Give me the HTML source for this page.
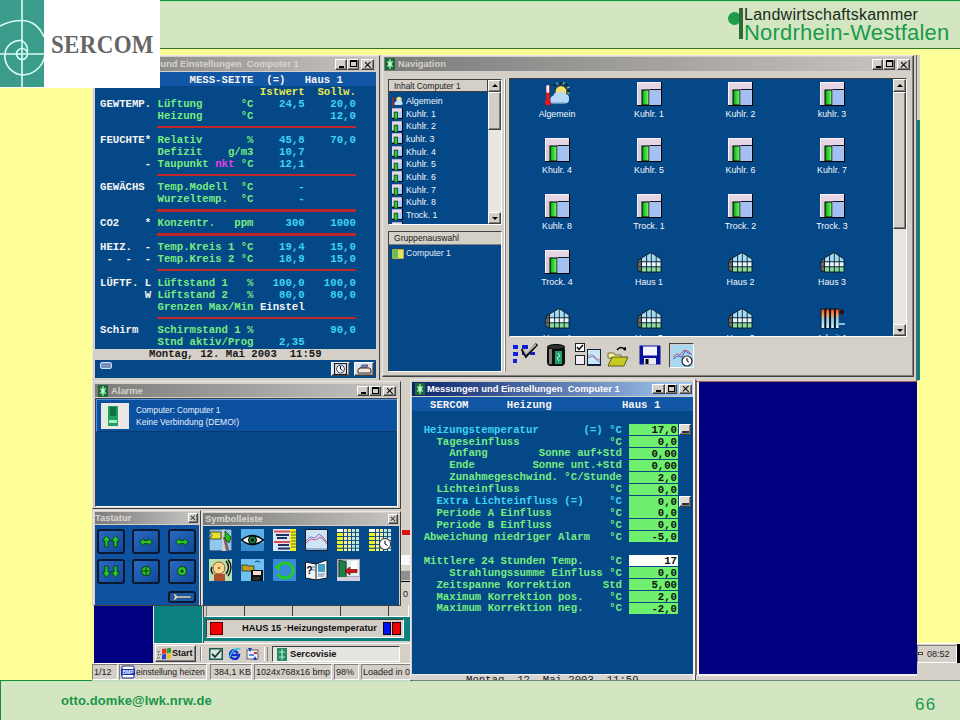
<!DOCTYPE html>
<html><head><meta charset="utf-8">
<style>
*{margin:0;padding:0;box-sizing:border-box}
html,body{width:960px;height:720px;overflow:hidden;background:#ffff99;font-family:"Liberation Sans",sans-serif}
.a{position:absolute}
.mono{font-family:"Liberation Mono",monospace;font-weight:bold;font-size:10.667px;line-height:12px;white-space:pre}
.ui{font-family:"Liberation Sans",sans-serif;font-size:8.5px;white-space:pre}
.face{background:#d4d0c8}
.tb-in{background:linear-gradient(90deg,#7c7c7c,#c8c6c4)}
.tb-act{background:linear-gradient(90deg,#0a246a,#a6caf0)}
.btn{position:absolute;background:#d4d0c8;border:1px solid;border-color:#fff #404040 #404040 #fff;box-shadow:inset -1px -1px #808080}
.bmin::after{content:'';position:absolute;left:3px;bottom:1px;width:5px;height:2px;background:#000}
.bmax::after{content:'';position:absolute;box-sizing:border-box;left:2px;top:0px;width:7px;height:7px;border:1px solid #000;border-top-width:2px}
.bcls::before,.bcls::after{content:'';position:absolute;left:50%;top:50%;width:7.5px;height:1.2px;background:#000;transform:translate(-55%,-60%) rotate(45deg)}
.bcls::after{transform:translate(-55%,-60%) rotate(-45deg)}
.w{color:#f4f4f4}.g{color:#76ec80}.c{color:#3cd4f4}.y{color:#e8e850}.m{color:#e040e0}.k{color:#101010}
.bsm::before,.bsm::after{width:5.5px;height:1.2px;background:#383838}
.rl{position:absolute;height:2px;background:#c02828}
</style></head><body>

<svg width="0" height="0" style="position:absolute">
<defs>
<linearGradient id="gg" x1="0" y1="0" x2="1" y2="0"><stop offset="0" stop-color="#10a010"/><stop offset="0.6" stop-color="#40e040"/><stop offset="1" stop-color="#80f080"/></linearGradient>
<linearGradient id="radg" x1="0" y1="0" x2="0" y2="1"><stop offset="0" stop-color="#ff5010"/><stop offset="0.3" stop-color="#f0a060"/><stop offset="0.55" stop-color="#90d0f0"/><stop offset="1" stop-color="#d0f0ff"/></linearGradient>
<symbol id="kuh" viewBox="0 0 25 24">
<rect x="0" y="0" width="25" height="24" fill="#000"/>
<rect x="0" y="0" width="24" height="23" fill="#d4cadc"/>
<rect x="1" y="1" width="23" height="6" fill="#e4d4e4"/>
<path d="M0.5 23V0.5H24" stroke="#faf4fa" fill="none"/>
<rect x="4.5" y="7.5" width="8" height="15.5" fill="#000"/>
<rect x="5.5" y="8.5" width="6" height="14" fill="url(#gg)"/>
<rect x="12.5" y="7.5" width="11" height="15.5" fill="#a4c0f2"/>
<path d="M12.5 7.5H24" stroke="#101828" stroke-width="1"/>
</symbol>
<symbol id="kuhs" viewBox="0 0 25 24">
<rect x="0" y="0" width="25" height="24" fill="#000"/>
<rect x="0" y="0" width="22.5" height="21.5" fill="#e2d8ea"/>
<rect x="4" y="8" width="9.5" height="16" fill="#0a200a"/>
<rect x="5.5" y="9.5" width="6.5" height="14.5" fill="#30c830"/>
<rect x="13.5" y="8.5" width="9" height="13" fill="#a8c8f8"/>
</symbol>
<symbol id="gh" viewBox="0 0 25 24">
<path d="M4.5 8 Q0.5 9.5 0.3 14 V18.5 Q0.8 21.5 4.5 22 Z" fill="#686868" stroke="#000" stroke-width="0.7"/>
<path d="M1 12.5 L4.5 11.5 M1 17 L4.5 16.5" stroke="#202020" stroke-width="0.7"/>
<path d="M4.5 8 L14 2.5 L24 9 V11.8 H4.5 Z" fill="#a4dcf4"/>
<rect x="4.5" y="11.8" width="19.5" height="5" fill="#e8f8fc"/>
<rect x="4.5" y="16.8" width="19.5" height="5.2" fill="#88dc9c"/>
<path d="M4.5 8 L14 2.5 L24 9 V22 H4.5 Z M4.5 11.8H24 M4.5 16.8H24 M9.6 5.2V22 M14.3 2.8V22 M19.2 6V22" fill="none" stroke="#061020" stroke-width="0.85"/>
</symbol>
<symbol id="alg" viewBox="0 0 25 24">
<g stroke="#1a1a08" stroke-width="1.3">
<path d="M15.5 2.5V0 M20.5 4L22.5 1.8 M22.5 8.5H25 M10.5 4L8.5 2 M21.5 13L24 14.5"/>
</g>
<g stroke="#e0e070" stroke-width="1"><path d="M12.8 2.5L11.5 0.3 M18.3 2.3L19.2 0.2 M22 6L24.5 5 M22.3 11L24.5 11.5"/></g>
<circle cx="16" cy="9.5" r="5.8" fill="#f4e070" stroke="#2a2a10" stroke-width="0.8"/>
<path d="M5.5 19 Q4.5 14.5 8.5 13.5 Q9.5 9.5 14 10.5 Q18 8.5 20.5 12 Q24.5 12.5 24 17 Q24.5 21 20 21.5 H9 Q5.5 22 5.5 19Z" fill="#b8d8f8"/>
<path d="M7 20.5 H21" stroke="#90b8e8" stroke-width="1"/>
<rect x="1" y="3" width="3.6" height="16" rx="1.8" fill="#e01818"/>
<rect x="1.4" y="3" width="2.8" height="8" rx="1.4" fill="#f8f4f4"/>
<circle cx="2.8" cy="20.5" r="3" fill="#e01818"/>
</symbol>
<symbol id="algs" viewBox="0 0 25 24">
<rect x="0" y="2" width="3" height="22" fill="#c02020"/>
<circle cx="16" cy="7" r="6" fill="#f0e080"/>
<path d="M5 18 Q5 12 11 11 Q14 7 19 9 Q24 10 24 15 Q25 20 20 20 H7Z" fill="#c8e0f8"/>
</symbol>
<symbol id="rad" viewBox="0 0 25 24">
<rect x="0.5" y="2.5" width="18.5" height="20" fill="#06101e"/>
<rect x="1.5" y="3.5" width="2.8" height="18.5" fill="url(#radg)"/>
<rect x="6.3" y="3.5" width="2.8" height="18.5" fill="url(#radg)"/>
<rect x="11.1" y="3.5" width="2.8" height="18.5" fill="url(#radg)"/>
<rect x="15.9" y="3.5" width="2.8" height="18.5" fill="url(#radg)"/>
<circle cx="21.5" cy="6" r="2.5" fill="#301010"/>
<rect x="19" y="17.3" width="6" height="1.4" fill="#c0e8ff"/>
</symbol>
<symbol id="tb1" viewBox="0 0 26 25">
<rect x="1" y="2" width="5" height="4" fill="#1020e0"/><rect x="1" y="9" width="5" height="4" fill="#1020e0"/><rect x="1" y="16" width="4" height="4" fill="#1020e0"/>
<rect x="10" y="2" width="6" height="4" fill="#1020d0"/><rect x="10" y="9" width="4" height="3" fill="#1020d0"/><rect x="18" y="9" width="5" height="3" fill="#1020d0"/>
<path d="M10 6 L14 13 L25 1" fill="none" stroke="#101010" stroke-width="3"/>
<path d="M11 6 L14 11 L24 1.5" fill="none" stroke="#c8c8c8" stroke-width="1.2"/>
</symbol>
<symbol id="tb2" viewBox="0 0 20 25">
<rect x="1" y="3" width="18" height="20" rx="4" fill="#101010"/>
<ellipse cx="10" cy="4" rx="8.5" ry="2.5" fill="#303030" stroke="#000"/>
<rect x="3" y="6" width="3" height="15" fill="#808080"/>
<rect x="9" y="8" width="7" height="13" fill="#20a070"/>
<path d="M12 10 L14 13 L11 15 L13 18" stroke="#c0ffe0" stroke-width="1" fill="none"/>
</symbol>
<symbol id="tb3" viewBox="0 0 26 25">
<rect x="12" y="6" width="14" height="17" fill="#10203a"/><rect x="13" y="7" width="12" height="14" fill="#c8e8f8"/>
<path d="M13 13 Q17 10 19 13 T25 17" stroke="#d06080" stroke-width="0.8" fill="none"/>
<path d="M13 15 Q18 12 20 15 T25 19" stroke="#6060c0" stroke-width="0.8" fill="none"/>
<rect x="0.5" y="0.5" width="9" height="8" fill="#fff" stroke="#202020"/>
<path d="M2 4 L4 6.5 L8 2" stroke="#000" stroke-width="1.4" fill="none"/>
<rect x="0.5" y="12.5" width="9" height="9" fill="#f0eef4" stroke="#202020"/>
</symbol>
<symbol id="tb4" viewBox="0 0 24 22">
<path d="M10 5 Q14 0 18 5" stroke="#000" stroke-width="1.5" fill="none"/><path d="M16 3 L19 6 L19 2Z" fill="#000"/>
<path d="M1 8 H7 L8 10 H14 V13 H1Z" fill="#f8f0a0" stroke="#404010" stroke-width="0.7"/>
<path d="M1 21 L5 12 H21 L17 21Z" fill="#c8c820" stroke="#404010" stroke-width="0.8"/>
</symbol>
<symbol id="tb5" viewBox="0 0 22 22">
<rect x="0.5" y="0.5" width="21" height="19" fill="#0a10a0"/>
<rect x="4" y="1.5" width="14" height="9" fill="#f4f4ff"/>
<rect x="5" y="13" width="12" height="6.5" fill="#e8e8f0"/><rect x="6.5" y="14" width="3" height="5" fill="#000"/>
</symbol>
<symbol id="tb6" viewBox="0 0 22 22">
<rect x="0" y="0" width="22" height="22" fill="#a8d8f0"/>
<path d="M2 12 L6 9 L9 10 L13 5 L17 6 L21 10" stroke="#d04050" stroke-width="0.9" fill="none"/>
<path d="M2 14 L7 11 L11 12 L14 6 L19 9" stroke="#4050c0" stroke-width="0.9" fill="none"/>
<circle cx="16" cy="16" r="5" fill="#fff" stroke="#202030" stroke-width="1.2"/>
<path d="M16 13V16L18 17" stroke="#000" stroke-width="1" fill="none"/>
</symbol>
</defs></svg>

<svg width="0" height="0" style="position:absolute"><defs>
<symbol id="s1" viewBox="0 0 23 22"><rect width="23" height="22" fill="#90c8f0" stroke="#102030" stroke-width="1"/><path d="M0.5 3 H12 V10 H0.5 L3 6.5Z" fill="#e8e030" stroke="#303010" stroke-width="0.8"/><path d="M13 0.5 L16 0.5 L17 22 H13Z" fill="#d0d0d0"/><path d="M14 8 L17 21.5 H20 L17 8Z" fill="#806060"/><path d="M16 2 L22 8 L20 14 L16 10Z" fill="#20c020" stroke="#063006" stroke-width="0.7"/></symbol>
<symbol id="s2" viewBox="0 0 23 22"><rect width="23" height="22" fill="#5ab0e8"/><rect y="14" width="23" height="8" fill="#3a90d0"/><path d="M0.5 11 Q11.5 2 22.5 11 Q11.5 20 0.5 11Z" fill="#f0f0f0" stroke="#000" stroke-width="1.6"/><circle cx="11.5" cy="11" r="4" fill="#108040" stroke="#000" stroke-width="1"/><circle cx="11.5" cy="11" r="1.5" fill="#000"/></symbol>
<symbol id="s3" viewBox="0 0 23 22"><rect width="23" height="22" fill="#d8e8f8"/><rect x="17" y="0" width="6" height="22" fill="#f0f020"/><rect x="1" y="1.5" width="16" height="2" fill="#e05050"/><rect x="3" y="5" width="13" height="2" fill="#203060"/><rect x="4" y="8" width="10" height="2" fill="#203060"/><rect x="1" y="12" width="16" height="2" fill="#e05050"/><rect x="5" y="15" width="11" height="2" fill="#203060"/><rect x="5" y="18.5" width="12" height="2" fill="#203060"/><path d="M18 3H23M18 6H23M18 9H23M18 12H23M18 15H23M18 18H23" stroke="#303030" stroke-width="0.7"/></symbol>
<symbol id="s4" viewBox="0 0 23 22"><rect x="0.5" y="0.5" width="22" height="21" fill="#d0e4f8" stroke="#102030"/><path d="M1 12 L5 8 L10 9 L14 5 L18 8 L22 13" stroke="#8060c0" stroke-width="0.9" fill="none"/><path d="M1 14 L6 10 L11 11 L15 8 L19 11 L22 15" stroke="#d04060" stroke-width="0.9" fill="none"/><rect x="1" y="19" width="21" height="2" fill="#90b0d8"/></symbol>
<symbol id="s5" viewBox="0 0 23 22"><rect width="23" height="22" fill="#0e4a8a"/><g fill="#f0f020"><rect x="0" y="4" width="6" height="3"/><rect x="0" y="8" width="6" height="3"/><rect x="0" y="12" width="6" height="3"/><rect x="0" y="16" width="6" height="3"/><rect x="0" y="19.5" width="6" height="2.5"/></g><rect x="0" y="0" width="6" height="3" fill="#fff"/><g fill="#f4f4a0"><rect x="7" y="0" width="3" height="22"/><rect x="11" y="0" width="3" height="22"/></g><g fill="#c0e8d0"><rect x="15" y="0" width="3" height="22"/><rect x="19" y="0" width="3" height="22"/></g><path d="M0 3.5H23M0 7.5H23M0 11.5H23M0 15.5H23M0 19.2H23" stroke="#0e4a8a" stroke-width="0.9"/></symbol>
<symbol id="s6" viewBox="0 0 23 22"><use href="#s5"/><circle cx="16" cy="15" r="5.5" fill="#fff" stroke="#303030" stroke-width="1"/><path d="M16 11.5V15L18.5 16.5" stroke="#000" stroke-width="1" fill="none"/></symbol>
<symbol id="s7" viewBox="0 0 23 22"><rect width="23" height="22" fill="#b8e0b0"/><rect x="5" y="15" width="11" height="7" fill="#b05030"/><circle cx="10" cy="9" r="6" fill="#f8d890" stroke="#a05020" stroke-width="1"/><circle cx="10" cy="9" r="1" fill="#a03010"/><path d="M17 2 Q22 8 17 15 M19 0.5 Q25 8 19 17 M3 8 Q1 12 4 15" stroke="#101010" stroke-width="1.4" fill="none"/></symbol>
<symbol id="s8" viewBox="0 0 23 22"><rect width="23" height="22" fill="#70c0f0"/><path d="M1 6 H6 L7 7 H13 V12 H1Z" fill="#c0a020" stroke="#202010" stroke-width="0.7"/><path d="M14 3 Q16 1 19 3" stroke="#103080" stroke-width="1" fill="none"/><rect x="10" y="11" width="12" height="11" fill="#101010"/><rect x="12" y="12" width="8" height="4" fill="#f8e0d0"/><rect x="12" y="18" width="7" height="3" fill="#303030"/></symbol>
<symbol id="s9" viewBox="0 0 23 22"><rect width="23" height="22" fill="#3a88d8"/><path d="M5 8 A8 7.5 0 1 1 5 15" stroke="#20d020" stroke-width="2.8" fill="none"/><path d="M1 8 L7 5 L7 12Z" fill="#20d020"/></symbol>
<symbol id="s10" viewBox="0 0 23 22"><rect width="23" height="22" fill="#054887"/><path d="M0.5 3 L11 5 L22 1 V19 L11 21 L0.5 19Z" fill="#f0f4f8" stroke="#101820" stroke-width="1"/><path d="M11 5V21" stroke="#101820"/><rect x="13" y="5" width="7" height="8" fill="#40a0c0"/><text x="1.5" y="15" font-size="10" font-weight="bold" font-family="Liberation Sans" fill="#000">?</text><path d="M6 8H10M6 11H10M13 15H20M13 17H19" stroke="#6080a0" stroke-width="1"/></symbol>
<symbol id="s11" viewBox="0 0 23 22"><rect width="23" height="22" fill="#b0a8b0"/><rect x="10" y="1" width="12" height="16" fill="#e0f0f0"/><rect x="14" y="2" width="6" height="8" fill="#fff"/><path d="M2 1 L9 3 V19 L2 21Z" fill="#20804a" stroke="#103020" stroke-width="0.8"/><path d="M8 12 L13 8 V10.5 H20 V13.5 H13 V16Z" fill="#e01010" stroke="#400" stroke-width="0.6"/><rect y="18" width="23" height="4" fill="#d0d0e0"/></symbol>
</defs></svg>

<!-- header band -->
<div class="a" style="left:0;top:0;width:960px;height:49px;background:#d3e6c1;border-top:1px solid #1f8a3a;border-bottom:1px solid #2a7a2a"></div>
<div class="a" style="left:0;top:1px;width:960px;height:1px;background:#a8f0b0"></div>
<!-- footer band -->
<div class="a" style="left:0;top:680px;width:960px;height:40px;background:#d3e6c1;border-top:1px solid #1f8a3a;border-left:1px solid #1f8a3a"></div>
<div class="a" style="left:1px;top:681px;width:959px;height:1px;background:#b4f0bc"></div>
<!-- screenshot grey bg -->
<div class="a face" style="left:92px;top:55px;width:828px;height:326px"></div>
<div class="a face" style="left:92px;top:380px;width:825px;height:301px"></div>

<!-- ===== W1 Messungen 1 ===== -->
<div class="a face" style="left:92px;top:55px;width:288px;height:327px;border:1px solid;border-color:#e8e8e8 #404040 #404040 #e8e8e8"></div>
<div class="a tb-in" style="left:95px;top:57px;width:281px;height:14px"></div>
<div class="a" style="left:106px;top:57px;font:bold 9.4px/14px 'Liberation Sans',sans-serif;color:#d8d4cc;white-space:pre">Messungen und Einstellungen  Computer 1</div>
<div class="btn bmin" style="left:335px;top:59px;width:12px;height:11px"></div>
<div class="btn bmax" style="left:347px;top:59px;width:12px;height:11px"></div>
<div class="btn bcls" style="left:361px;top:59px;width:13px;height:11px"></div>
<div class="a" style="left:95px;top:72px;width:281px;height:277px;background:#054887"></div>
<div class="a" style="left:95px;top:72px;width:281px;height:14px;background:#1256a6"></div>
<div class="a mono w" style="left:100px;top:74px">              MESS-SEITE  (=)   Haus 1</div>
<div class="a mono" style="left:100px;top:87px;line-height:11.92px"><span class="y">                         Istwert  Sollw.</span>
<span class="w">GEWTEMP.</span> <span class="g">Lüftung      °C</span>    <span class="c">24,5    20,0</span>
<span class="g">         Heizung      °C</span>            <span class="c">12,0</span>

<span class="w">FEUCHTE*</span> <span class="g">Relativ       %</span>    <span class="c">45,8    70,0</span>
<span class="g">         Defizit    g/m3</span>    <span class="c">10,7</span>
<span class="w">       -</span> <span class="g">Taupunkt</span> <span class="m">nkt</span> <span class="g">°C</span>    <span class="c">12,1</span>

<span class="w">GEWÄCHS</span>  <span class="g">Temp.Modell  °C</span>       <span class="c">-</span>
<span class="g">         Wurzeltemp.  °C</span>       <span class="c">-</span>

<span class="w">CO2    *</span> <span class="g">Konzentr.   ppm</span>     <span class="c">300    1000</span>

<span class="w">HEIZ.  -</span> <span class="g">Temp.Kreis 1 °C</span>    <span class="c">19,4    15,0</span>
<span class="w"> -  -  -</span> <span class="g">Temp.Kreis 2 °C</span>    <span class="c">18,9    15,0</span>

<span class="w">LÜFTF. L</span> <span class="g">Lüftstand 1   %</span>   <span class="c">100,0   100,0</span>
<span class="w">       W</span> <span class="g">Lüftstand 2   %</span>    <span class="c">80,0    80,0</span>
<span class="g">         Grenzen Max/Min</span> <span class="w">Einstel</span>

<span class="w">Schirm</span>   <span class="g">Schirmstand 1 %</span>            <span class="c">90,0</span>
<span class="g">         Stnd aktiv/Prog</span>    <span class="c">2,35</span></div>
<div class="rl" style="left:157px;top:125.9px;width:199px;height:2.5px"></div>
<div class="rl" style="left:157px;top:173.6px;width:199px;height:2.5px"></div>
<div class="rl" style="left:157px;top:209.3px;width:199px;height:2.5px"></div>
<div class="rl" style="left:157px;top:233.2px;width:199px;height:2.5px"></div>
<div class="rl" style="left:157px;top:268.9px;width:199px;height:2.5px"></div>
<div class="rl" style="left:157px;top:316.6px;width:199px;height:2.5px"></div>
<div class="a face" style="left:95px;top:349px;width:281px;height:11px"></div>
<div class="a" style="left:149px;top:348px;font:bold 10.667px/12px 'Liberation Mono',monospace;color:#181818;white-space:pre">Montag, 12. Mai 2003  11:59</div>
<div class="a" style="left:95px;top:360px;width:281px;height:18px;background:#054887"></div>
<div class="a" style="left:100px;top:362px;width:12px;height:7px;border:1px solid #d0e0ff;border-radius:2px;background:#7890c0"></div>
<div class="btn" style="left:331px;top:362px;width:19px;height:14px;background:#dde4ee"></div><svg class="a" style="left:334px;top:363px" width="13" height="12"><rect x="0.5" y="0.5" width="12" height="11" fill="#e8eef8" stroke="#101828" stroke-width="1.2"/><circle cx="6.5" cy="6" r="4" fill="#f8f8ff" stroke="#404050"/><path d="M6.5 3V6L8.5 7.5" stroke="#000" fill="none"/></svg>
<div class="btn" style="left:354px;top:362px;width:20px;height:14px;background:#dde4ee"></div><svg class="a" style="left:357px;top:364px" width="15" height="11"><path d="M5 1 L11 1 L9 5 H3Z" fill="#8080c0" stroke="#303040" stroke-width="0.7"/><path d="M1 6 Q1 4 4 4 H12 Q14 4 14 7 V9 H1Z" fill="#f0e8e0" stroke="#402010" stroke-width="1"/></svg>

<!-- ===== Navigation window ===== -->
<div class="a face" style="left:382px;top:55px;width:532px;height:322px;border:1px solid;border-color:#e8e8e8 #404040 #404040 #e8e8e8;box-shadow:inset -1px -1px #808080"></div>
<div class="a tb-in" style="left:384px;top:57px;width:528px;height:14px"></div>
<svg class="a" style="left:385px;top:58px" width="10" height="12"><rect width="10" height="12" fill="#1f6a3a"/><path d="M5 1v10M2 4h6M2 8h6" stroke="#8ee0a0" stroke-width="1.5"/><circle cx="5" cy="6" r="2" fill="#c0ffd0"/></svg>
<div class="a" style="left:398px;top:57px;font:bold 9.4px/14px 'Liberation Sans',sans-serif;color:#d4d0c8;white-space:pre">Navigation</div>
<div class="btn bmin" style="left:872px;top:59px;width:11px;height:11px"></div>
<div class="btn bmax" style="left:883px;top:59px;width:12px;height:11px"></div>
<div class="btn bcls" style="left:897px;top:59px;width:13px;height:11px"></div>
<div class="a" style="left:388px;top:79px;width:114px;height:146px;border:1px solid;border-color:#404040 #fff #fff #404040;background:#054887"></div>
<div class="a btnh" style="left:389px;top:80px;width:99px;height:12px;background:#d4d0c8;border-right:1px solid #404040;border-bottom:1px solid #404040"></div>
<div class="a ui" style="left:394px;top:80px;font-size:8.4px;line-height:12px;color:#202020">Inhalt Computer 1</div>
<div class="a" style="left:488px;top:80px;width:13px;height:144px;background:#e8e6e2"></div>
<div class="btn" style="left:488px;top:80px;width:13px;height:12px"></div>
<div class="btn" style="left:488px;top:92px;width:13px;height:38px"></div>
<div class="btn" style="left:488px;top:212px;width:13px;height:12px"></div>
<div class="a" style="left:492px;top:84px;width:0;height:0;border-left:3px solid transparent;border-right:3px solid transparent;border-bottom:3px solid #000"></div>
<div class="a" style="left:492px;top:217px;width:0;height:0;border-left:3px solid transparent;border-right:3px solid transparent;border-top:3px solid #000"></div>
<div class="a" style="left:389px;top:92px;width:99px;height:132px;overflow:hidden">
<svg class="a" style="left:3px;top:3.5px" width="11" height="11"><use href="#algs"/></svg>
<div class="a ui" style="left:17px;top:3.0px;font-size:8.8px;line-height:13px;color:#f0f6ff">Algemein</div>
<svg class="a" style="left:3px;top:16.2px" width="11" height="11"><use href="#kuhs"/></svg>
<div class="a ui" style="left:17px;top:15.7px;font-size:8.8px;line-height:13px;color:#f0f6ff">Kuhlr. 1</div>
<svg class="a" style="left:3px;top:28.8px" width="11" height="11"><use href="#kuhs"/></svg>
<div class="a ui" style="left:17px;top:28.3px;font-size:8.8px;line-height:13px;color:#f0f6ff">Kuhlr. 2</div>
<svg class="a" style="left:3px;top:41.4px" width="11" height="11"><use href="#kuhs"/></svg>
<div class="a ui" style="left:17px;top:40.9px;font-size:8.8px;line-height:13px;color:#f0f6ff">kuhlr. 3</div>
<svg class="a" style="left:3px;top:54.1px" width="11" height="11"><use href="#kuhs"/></svg>
<div class="a ui" style="left:17px;top:53.6px;font-size:8.8px;line-height:13px;color:#f0f6ff">Khulr. 4</div>
<svg class="a" style="left:3px;top:66.8px" width="11" height="11"><use href="#kuhs"/></svg>
<div class="a ui" style="left:17px;top:66.2px;font-size:8.8px;line-height:13px;color:#f0f6ff">Kuhlr. 5</div>
<svg class="a" style="left:3px;top:79.4px" width="11" height="11"><use href="#kuhs"/></svg>
<div class="a ui" style="left:17px;top:78.9px;font-size:8.8px;line-height:13px;color:#f0f6ff">Kuhlr. 6</div>
<svg class="a" style="left:3px;top:92.1px" width="11" height="11"><use href="#kuhs"/></svg>
<div class="a ui" style="left:17px;top:91.6px;font-size:8.8px;line-height:13px;color:#f0f6ff">Kuhlr. 7</div>
<svg class="a" style="left:3px;top:104.7px" width="11" height="11"><use href="#kuhs"/></svg>
<div class="a ui" style="left:17px;top:104.2px;font-size:8.8px;line-height:13px;color:#f0f6ff">Kuhlr. 8</div>
<svg class="a" style="left:3px;top:117.4px" width="11" height="11"><use href="#kuhs"/></svg>
<div class="a ui" style="left:17px;top:116.9px;font-size:8.8px;line-height:13px;color:#f0f6ff">Trock. 1</div>
<svg class="a" style="left:3px;top:130.0px" width="11" height="11"><use href="#kuhs"/></svg>
<div class="a ui" style="left:17px;top:129.5px;font-size:8.8px;line-height:13px;color:#f0f6ff">Trock. 2</div>
</div>
<div class="a" style="left:388px;top:231px;width:114px;height:141px;border:1px solid;border-color:#404040 #fff #fff #404040;background:#054887"></div>
<div class="a" style="left:389px;top:232px;width:112px;height:13px;background:#d4d0c8;border-bottom:1px solid #808080"></div>
<div class="a ui" style="left:394px;top:232px;font-size:8.6px;line-height:13px;color:#202020">Gruppenauswahl</div>
<svg class="a" style="left:392px;top:248px" width="12" height="11"><rect x="0" y="1" width="12" height="10" fill="#e8e060" stroke="#404020" stroke-width="0.6"/><rect x="1" y="2" width="5" height="8" fill="#60c060"/></svg>
<div class="a ui" style="left:406px;top:247px;font-size:8.6px;line-height:13px;color:#e0ecff">Computer 1</div>
<div class="a" style="left:504px;top:79px;width:2px;height:293px;border-left:1px solid #fff;border-right:1px solid #808080"></div>
<div class="a" style="left:509px;top:78px;width:398px;height:259px;border:1px solid;border-color:#404040 #fff #fff #404040"></div>
<div class="a" style="left:510px;top:79px;width:383px;height:257px;background:#054887;overflow:hidden">
<svg class="a" style="left:34.5px;top:2.5px" width="25" height="24"><use href="#alg"/></svg>
<div class="a ui" style="left:7px;top:29.5px;width:80px;text-align:center;font-size:8.8px;line-height:11px;color:#f4f8ff">Algemein</div>
<svg class="a" style="left:126.5px;top:2.5px" width="25" height="24"><use href="#kuh"/></svg>
<div class="a ui" style="left:99px;top:29.5px;width:80px;text-align:center;font-size:8.8px;line-height:11px;color:#f4f8ff">Kuhlr. 1</div>
<svg class="a" style="left:218.0px;top:2.5px" width="25" height="24"><use href="#kuh"/></svg>
<div class="a ui" style="left:190.5px;top:29.5px;width:80px;text-align:center;font-size:8.8px;line-height:11px;color:#f4f8ff">Kuhlr. 2</div>
<svg class="a" style="left:309.5px;top:2.5px" width="25" height="24"><use href="#kuh"/></svg>
<div class="a ui" style="left:282px;top:29.5px;width:80px;text-align:center;font-size:8.8px;line-height:11px;color:#f4f8ff">kuhlr. 3</div>
<svg class="a" style="left:34.5px;top:58.5px" width="25" height="24"><use href="#kuh"/></svg>
<div class="a ui" style="left:7px;top:85.5px;width:80px;text-align:center;font-size:8.8px;line-height:11px;color:#f4f8ff">Khulr. 4</div>
<svg class="a" style="left:126.5px;top:58.5px" width="25" height="24"><use href="#kuh"/></svg>
<div class="a ui" style="left:99px;top:85.5px;width:80px;text-align:center;font-size:8.8px;line-height:11px;color:#f4f8ff">Kuhlr. 5</div>
<svg class="a" style="left:218.0px;top:58.5px" width="25" height="24"><use href="#kuh"/></svg>
<div class="a ui" style="left:190.5px;top:85.5px;width:80px;text-align:center;font-size:8.8px;line-height:11px;color:#f4f8ff">Kuhlr. 6</div>
<svg class="a" style="left:309.5px;top:58.5px" width="25" height="24"><use href="#kuh"/></svg>
<div class="a ui" style="left:282px;top:85.5px;width:80px;text-align:center;font-size:8.8px;line-height:11px;color:#f4f8ff">Kuhlr. 7</div>
<svg class="a" style="left:34.5px;top:114.5px" width="25" height="24"><use href="#kuh"/></svg>
<div class="a ui" style="left:7px;top:141.5px;width:80px;text-align:center;font-size:8.8px;line-height:11px;color:#f4f8ff">Kuhlr. 8</div>
<svg class="a" style="left:126.5px;top:114.5px" width="25" height="24"><use href="#kuh"/></svg>
<div class="a ui" style="left:99px;top:141.5px;width:80px;text-align:center;font-size:8.8px;line-height:11px;color:#f4f8ff">Trock. 1</div>
<svg class="a" style="left:218.0px;top:114.5px" width="25" height="24"><use href="#kuh"/></svg>
<div class="a ui" style="left:190.5px;top:141.5px;width:80px;text-align:center;font-size:8.8px;line-height:11px;color:#f4f8ff">Trock. 2</div>
<svg class="a" style="left:309.5px;top:114.5px" width="25" height="24"><use href="#kuh"/></svg>
<div class="a ui" style="left:282px;top:141.5px;width:80px;text-align:center;font-size:8.8px;line-height:11px;color:#f4f8ff">Trock. 3</div>
<svg class="a" style="left:34.5px;top:170.5px" width="25" height="24"><use href="#kuh"/></svg>
<div class="a ui" style="left:7px;top:197.5px;width:80px;text-align:center;font-size:8.8px;line-height:11px;color:#f4f8ff">Trock. 4</div>
<svg class="a" style="left:126.5px;top:170.5px" width="25" height="24"><use href="#gh"/></svg>
<div class="a ui" style="left:99px;top:197.5px;width:80px;text-align:center;font-size:8.8px;line-height:11px;color:#f4f8ff">Haus 1</div>
<svg class="a" style="left:218.0px;top:170.5px" width="25" height="24"><use href="#gh"/></svg>
<div class="a ui" style="left:190.5px;top:197.5px;width:80px;text-align:center;font-size:8.8px;line-height:11px;color:#f4f8ff">Haus 2</div>
<svg class="a" style="left:309.5px;top:170.5px" width="25" height="24"><use href="#gh"/></svg>
<div class="a ui" style="left:282px;top:197.5px;width:80px;text-align:center;font-size:8.8px;line-height:11px;color:#f4f8ff">Haus 3</div>
<svg class="a" style="left:34.5px;top:226.5px" width="25" height="24"><use href="#gh"/></svg>
<div class="a ui" style="left:7px;top:253.5px;width:80px;text-align:center;font-size:8.8px;line-height:11px;color:#f4f8ff">Haus 4</div>
<svg class="a" style="left:126.5px;top:226.5px" width="25" height="24"><use href="#gh"/></svg>
<div class="a ui" style="left:99px;top:253.5px;width:80px;text-align:center;font-size:8.8px;line-height:11px;color:#f4f8ff">Haus 5</div>
<svg class="a" style="left:218.0px;top:226.5px" width="25" height="24"><use href="#gh"/></svg>
<div class="a ui" style="left:190.5px;top:253.5px;width:80px;text-align:center;font-size:8.8px;line-height:11px;color:#f4f8ff">Haus 6</div>
<svg class="a" style="left:309.5px;top:226.5px" width="25" height="24"><use href="#rad"/></svg>
<div class="a ui" style="left:282px;top:253.5px;width:80px;text-align:center;font-size:8.8px;line-height:11px;color:#f4f8ff">Arbeit 1</div>
</div>
<div class="a" style="left:893px;top:79px;width:13px;height:257px;background:#e8e6e2"></div>
<div class="btn" style="left:893px;top:79px;width:13px;height:13px"></div>
<div class="btn" style="left:893px;top:92px;width:13px;height:137px"></div>
<div class="btn" style="left:893px;top:324px;width:13px;height:12px"></div>
<div class="a" style="left:897px;top:84px;width:0;height:0;border-left:3px solid transparent;border-right:3px solid transparent;border-bottom:3px solid #000"></div>
<div class="a" style="left:897px;top:329px;width:0;height:0;border-left:3px solid transparent;border-right:3px solid transparent;border-top:3px solid #000"></div>
<svg class="a" style="left:512px;top:343px" width="26" height="25"><use href="#tb1"/></svg>
<svg class="a" style="left:546px;top:343px" width="20" height="25"><use href="#tb2"/></svg>
<svg class="a" style="left:575px;top:343px" width="26" height="25"><use href="#tb3"/></svg>
<svg class="a" style="left:607px;top:345px" width="24" height="22"><use href="#tb4"/></svg>
<svg class="a" style="left:639px;top:345px" width="22" height="22"><use href="#tb5"/></svg>
<div class="a" style="left:669px;top:343px;width:25px;height:25px;border:1px solid;border-color:#404040 #fff #fff #404040"></div>
<svg class="a" style="left:671px;top:345px" width="22" height="22"><use href="#tb6"/></svg>
<div class="a face" style="left:914px;top:55px;width:6px;height:326px"></div>
<div class="a" style="left:916px;top:55px;width:1px;height:326px;background:#606060"></div>
<div class="a" style="left:917px;top:120px;width:3px;height:260px;background:#0a8080"></div>
<!-- ===== bottom-left: desktop bits ===== -->
<div class="a face" style="left:92px;top:380px;width:320px;height:301px"></div>
<div class="a" style="left:92px;top:605px;width:62px;height:1px;background:#000"></div>
<div class="a" style="left:92px;top:605px;width:2px;height:58px;background:#ffff99"></div>
<div class="a" style="left:94px;top:606px;width:59px;height:58px;background:#000080"></div>
<div class="a" style="left:153px;top:606px;width:49px;height:37px;background:#0a8080"></div>
<div class="a" style="left:153px;top:606px;width:1px;height:37px;background:#e0f0f0"></div>
<!-- background window pieces -->
<div class="a face" style="left:203px;top:605px;width:209px;height:38px"></div>
<div class="a" style="left:203px;top:605px;width:1px;height:38px;background:#404040"></div>
<div class="a" style="left:206px;top:605px;width:203px;height:12px;border:1px solid;border-color:#808080 #fff #fff #808080;border-top:none"></div>
<div class="a" style="left:244px;top:605px;width:1px;height:11px;background:#404040"></div>
<div class="a" style="left:292px;top:605px;width:1px;height:11px;background:#404040"></div>
<div class="a" style="left:340px;top:605px;width:1px;height:11px;background:#404040"></div>
<div class="a" style="left:388px;top:605px;width:1px;height:11px;background:#404040"></div>
<div class="a" style="left:203px;top:617px;width:209px;height:24px;background:#0a8080"></div>
<div class="a face" style="left:206px;top:619px;width:198px;height:19px;border:1px solid;border-color:#404040 #fff #fff #404040"></div>
<div class="a" style="left:210px;top:622px;width:13px;height:13px;background:#f00000;border:1px solid #600"></div>
<div class="a" style="left:242px;top:619px;font:bold 9.3px/19px 'Liberation Sans',sans-serif;color:#101010;white-space:pre">HAUS 15 ·Heizungstemperatur</div>
<div class="a" style="left:383px;top:622px;width:8px;height:13px;background:#0010f0;border:1px solid #002"></div>
<div class="a" style="left:392px;top:622px;width:9px;height:13px;background:#f00000;border:1px solid #200"></div>
<!-- strip between left windows and W2 -->
<div class="a face" style="left:400px;top:380px;width:12px;height:225px"></div>
<div class="a" style="left:402px;top:530px;width:9px;height:5px;background:#e01010"></div>
<div class="a" style="left:401px;top:555px;width:10px;height:10px;background:#fafafa"></div>
<div class="a" style="left:401px;top:566px;width:10px;height:4px;background:#d8d8c8"></div>
<div class="a" style="left:401px;top:571px;width:10px;height:9px;background:#909090"></div>
<div class="a" style="left:401px;top:581px;width:10px;height:1px;background:#000"></div>
<div class="a" style="left:403px;top:587px;font:9px/14px 'Liberation Sans',sans-serif;color:#202020">0</div>
<!-- taskbar -->
<div class="a face" style="left:153px;top:643px;width:259px;height:21px;border-top:1px solid #fff"></div>
<div class="btn" style="left:155px;top:645px;width:41px;height:17px"></div>
<svg class="a" style="left:157px;top:647px" width="15" height="14"><g transform="skewY(-8) translate(0,2)"><path d="M5 1 Q7 0 9 1 V6 Q7 5 5 6Z" fill="#e83020"/><path d="M9.5 1 Q12 0 14 1 V6 Q12 5 9.5 6Z" fill="#30a030"/><path d="M5 6.5 Q7 5.5 9 6.5 V11.5 Q7 10.5 5 11.5Z" fill="#2040e0"/><path d="M9.5 6.5 Q12 5.5 14 6.5 V11.5 Q12 10.5 9.5 11.5Z" fill="#f0c020"/><path d="M0.5 3H3M1 6H3.5M0.5 9H3" stroke="#303030" stroke-width="1.2" stroke-dasharray="1 1"/></g></svg>
<div class="a" style="left:172px;top:645px;font:bold 9px/17px 'Liberation Sans',sans-serif;color:#101010">Start</div>
<div class="a" style="left:200px;top:647px;width:2px;height:14px;border-left:1px solid #808080;border-right:1px solid #fff"></div>
<svg class="a" style="left:209px;top:648px" width="14" height="12"><rect x="0" y="0" width="14" height="12" fill="#1a5a50"/><rect x="1.5" y="1.5" width="11" height="9" fill="#d8e8e0"/><path d="M3 6 L6 9 L12 2" stroke="#1a3a30" stroke-width="1.8" fill="none"/></svg>
<svg class="a" style="left:228px;top:648px" width="13" height="12"><path d="M6.5 2 A4.5 4.5 0 1 0 11 7 H3.5 A3 3 0 0 1 9.5 5.5" fill="none" stroke="#1030d0" stroke-width="2.4"/><path d="M1 10 Q6 -2 12.5 1.5" fill="none" stroke="#30c0e0" stroke-width="1.4"/></svg>
<svg class="a" style="left:246px;top:647px" width="13" height="14"><rect x="1" y="3" width="11" height="9" fill="#f0f0f8" stroke="#404050" stroke-width="0.8"/><path d="M2 1 L6 1 L4 5Z M11 13 L7 13 L9 9Z" fill="#1040c0"/><rect x="8" y="5" width="3" height="2" fill="#d03030"/><path d="M3 8 H8" stroke="#3060e0" stroke-width="1.5"/></svg>
<div class="a" style="left:264px;top:647px;width:4px;height:14px;border-left:1px solid #fff;border-right:1px solid #808080"></div>
<div class="a" style="left:272px;top:646px;width:128px;height:16px;background:#e6e4e0;border:1px solid;border-color:#404040 #fff #fff #404040"></div>
<svg class="a" style="left:277px;top:648px" width="10" height="13"><rect width="10" height="13" fill="#2a8a60"/><path d="M5 1v11M2 4h6M2 9h6" stroke="#b0f0d0" stroke-width="1.2"/></svg>
<div class="a" style="left:290px;top:646px;font:bold 9.3px/16px 'Liberation Sans',sans-serif;color:#101010">Sercovisie</div>
<!-- viewer status bar -->
<div class="a face" style="left:92px;top:663px;width:320px;height:18px;border-top:1px solid #fff"></div>
<div class="a" style="left:92px;top:664px;width:26px;height:16px;border:1px solid;border-color:#808080 #fff #fff #808080"></div>
<div class="a ui" style="left:94px;top:665px;font-size:9px;line-height:14px;color:#202020">1/12</div>
<div class="a" style="left:119px;top:664px;width:88px;height:16px;border:1px solid;border-color:#808080 #fff #fff #808080"></div>
<svg class="a" style="left:121px;top:665px" width="14" height="14"><rect x="1" y="1" width="12" height="12" rx="1" fill="#fff" stroke="#102080"/><rect x="0" y="4" width="14" height="6" fill="#1030c0"/><text x="1.5" y="9" font-size="5" fill="#fff" font-family="Liberation Sans" font-weight="bold">BMP</text></svg>
<div class="a ui" style="left:136px;top:665px;font-size:8.6px;line-height:14px;color:#202020">einstellung heizen</div>
<div class="a" style="left:210px;top:664px;width:42px;height:16px;border:1px solid;border-color:#808080 #fff #fff #808080"></div>
<div class="a ui" style="left:214px;top:665px;font-size:9px;line-height:14px;color:#202020">384,1 KB</div>
<div class="a" style="left:254px;top:664px;width:78px;height:16px;border:1px solid;border-color:#808080 #fff #fff #808080"></div>
<div class="a ui" style="left:256px;top:665px;font-size:9px;line-height:14px;color:#202020">1024x768x16 bmp</div>
<div class="a" style="left:334px;top:664px;width:25px;height:16px;border:1px solid;border-color:#808080 #fff #fff #808080"></div>
<div class="a ui" style="left:336px;top:665px;font-size:9px;line-height:14px;color:#202020">98%</div>
<div class="a" style="left:361px;top:664px;width:51px;height:16px;border:1px solid;border-color:#808080 #fff #fff #808080"></div>
<div class="a ui" style="left:363px;top:665px;font-size:9px;line-height:14px;color:#202020">Loaded in 0</div>

<!-- ===== Alarm window ===== -->
<div class="a face" style="left:92px;top:381px;width:309px;height:128px;border:1px solid;border-color:#e8e8e8 #404040 #404040 #e8e8e8"></div>
<div class="a tb-in" style="left:95px;top:384px;width:303px;height:13px"></div>
<svg class="a" style="left:98px;top:385px" width="10" height="12"><rect width="10" height="12" fill="#1f6a3a"/><path d="M5 1v10M2 4h6M2 8h6" stroke="#8ee0a0" stroke-width="1.5"/><circle cx="5" cy="6" r="2" fill="#c0ffd0"/></svg>
<div class="a" style="left:111px;top:384px;font:bold 9.4px/13px 'Liberation Sans',sans-serif;color:#d4d0c8">Alarme</div>
<div class="btn bmin" style="left:357px;top:386px;width:12px;height:10px"></div>
<div class="btn bmax" style="left:369px;top:386px;width:12px;height:10px"></div>
<div class="btn bcls" style="left:383px;top:386px;width:13px;height:10px"></div>
<div class="a" style="left:95px;top:398px;width:303px;height:109px;background:#054887;border:1px solid;border-color:#404040 #fff #fff #404040"></div>
<div class="a" style="left:96px;top:399px;width:301px;height:33px;background:#0c50a0;border-top:1px solid #5090e0;border-left:1px solid #5090e0;border-bottom:1px solid #083a70"></div>
<svg class="a" style="left:101px;top:403px" width="28" height="26"><rect width="28" height="26" fill="#ece8e8"/><rect x="2" y="2" width="5" height="22" fill="#e0f0d8"/><rect x="7" y="3" width="10" height="20" fill="#20a060"/><rect x="9" y="4" width="6" height="9" fill="#107040"/><rect x="8" y="17" width="8" height="3" fill="#a0f0c0"/></svg>
<div class="a ui" style="left:136px;top:404px;font-size:8.3px;line-height:12px;color:#e8f0ff">Computer: Computer 1</div>
<div class="a ui" style="left:136px;top:416px;font-size:8.5px;line-height:12px;color:#e8f0ff">Keine Verbindung (DEMO!)</div>

<!-- ===== Tastatur ===== -->
<div class="a face" style="left:93px;top:510px;width:108px;height:96px;border:1px solid;border-color:#e8e8e8 #404040 #404040 #e8e8e8"></div>
<div class="a tb-in" style="left:95px;top:512px;width:104px;height:12px"></div>
<div class="a" style="left:95px;top:511px;font:bold 9.4px/13px 'Liberation Sans',sans-serif;color:#dcd8d0">Tastatur</div>
<div class="btn bcls bsm" style="left:188px;top:513px;width:10px;height:10px"></div>
<div class="a" style="left:95px;top:525px;width:104px;height:80px;background:#0e52a0"></div>

<div class="a" style="left:97px;top:529px;width:28px;height:25px;border:2px solid #0a1830;border-radius:3px;background:linear-gradient(135deg,#2a6ac0,#0e4a98)"></div>
<svg class="a" style="left:102px;top:535px" width="18" height="13"><path d="M4.5 0.5 L8.5 6 H6 V12 H3 V6 H0.5Z M13.5 0.5 L17.5 6 H15 V12 H12 V6 H9.5Z" fill="#28c828" stroke="#063006" stroke-width="0.8"/></svg>
<div class="a" style="left:132px;top:529px;width:28px;height:25px;border:2px solid #0a1830;border-radius:3px;background:linear-gradient(135deg,#2a6ac0,#0e4a98)"></div>
<svg class="a" style="left:139px;top:538px" width="14" height="8"><path d="M0.5 4 L5 0.5 V2.5 H9 V0.5 L13.5 4 L9 7.5 V5.5 H5 V7.5Z" fill="#28c828" stroke="#063006" stroke-width="0.7"/></svg>
<div class="a" style="left:168px;top:529px;width:28px;height:25px;border:2px solid #0a1830;border-radius:3px;background:linear-gradient(135deg,#2a6ac0,#0e4a98)"></div>
<svg class="a" style="left:175px;top:538px" width="14" height="8"><path d="M0.5 4 L5 0.5 V2.5 H9 V0.5 L13.5 4 L9 7.5 V5.5 H5 V7.5Z" fill="#28c828" stroke="#063006" stroke-width="0.7"/></svg>
<div class="a" style="left:97px;top:559px;width:28px;height:25px;border:2px solid #0a1830;border-radius:3px;background:linear-gradient(135deg,#2a6ac0,#0e4a98)"></div>
<svg class="a" style="left:102px;top:565px" width="18" height="13"><path d="M4.5 12.5 L8.5 7 H6 V1 H3 V7 H0.5Z M13.5 12.5 L17.5 7 H15 V1 H12 V7 H9.5Z" fill="#28c828" stroke="#063006" stroke-width="0.8"/></svg>
<div class="a" style="left:132px;top:559px;width:28px;height:25px;border:2px solid #0a1830;border-radius:3px;background:linear-gradient(135deg,#2a6ac0,#0e4a98)"></div>
<svg class="a" style="left:140px;top:565px" width="12" height="12"><circle cx="6" cy="6" r="4.5" fill="#28c828" stroke="#063006" stroke-width="0.9"/><path d="M6 2.5V9.5M2.5 6H9.5" stroke="#063006" stroke-width="1"/></svg>
<div class="a" style="left:168px;top:559px;width:28px;height:25px;border:2px solid #0a1830;border-radius:3px;background:linear-gradient(135deg,#2a6ac0,#0e4a98)"></div>
<svg class="a" style="left:176px;top:565px" width="12" height="12"><circle cx="6" cy="6" r="4.5" fill="#28c828" stroke="#063006" stroke-width="0.9"/><circle cx="6" cy="6" r="1.6" fill="#063006"/></svg>
<div class="a" style="left:168px;top:591px;width:28px;height:12px;border:2px solid #0a1830;border-radius:3px;background:#1a5aa8"></div>
<svg class="a" style="left:171px;top:593px" width="22" height="8"><path d="M2 1 Q5 0 6 3 H20 V5 H6 Q5 8 2 7 L4 4Z" fill="#e0e0e0" stroke="#404040" stroke-width="0.6"/></svg>
<div class="a face" style="left:201px;top:511px;width:200px;height:95px;border:1px solid;border-color:#e8e8e8 #404040 #404040 #e8e8e8"></div>
<div class="a tb-in" style="left:203px;top:513px;width:196px;height:12px"></div>
<div class="a" style="left:205px;top:512px;font:bold 9.4px/13px 'Liberation Sans',sans-serif;color:#dcd8d0">Symbolleiste</div>
<div class="btn bcls bsm" style="left:388px;top:514px;width:10px;height:10px"></div>
<div class="a" style="left:203px;top:526px;width:196px;height:79px;background:#054887"></div>
<svg class="a" style="left:208.5px;top:528.5px" width="23" height="22"><use href="#s1"/></svg>
<svg class="a" style="left:240.5px;top:528.5px" width="23" height="22"><use href="#s2"/></svg>
<svg class="a" style="left:272.5px;top:528.5px" width="23" height="22"><use href="#s3"/></svg>
<svg class="a" style="left:304.7px;top:528.5px" width="23" height="22"><use href="#s4"/></svg>
<svg class="a" style="left:336.5px;top:528.5px" width="23" height="22"><use href="#s5"/></svg>
<svg class="a" style="left:368.7px;top:528.5px" width="23" height="22"><use href="#s6"/></svg>
<svg class="a" style="left:208.5px;top:558.5px" width="23" height="22"><use href="#s7"/></svg>
<svg class="a" style="left:240.5px;top:558.5px" width="23" height="22"><use href="#s8"/></svg>
<svg class="a" style="left:272.5px;top:558.5px" width="23" height="22"><use href="#s9"/></svg>
<svg class="a" style="left:304.7px;top:558.5px" width="23" height="22"><use href="#s10"/></svg>
<svg class="a" style="left:336.5px;top:558.5px" width="23" height="22"><use href="#s11"/></svg>
<!-- ===== W2 Messungen 2 ===== -->
<div class="a face" style="left:410px;top:379px;width:286px;height:302px;border:1px solid;border-color:#e8e8e8 #404040 #404040 #e8e8e8"></div>
<div class="a tb-act" style="left:412px;top:382px;width:281px;height:14px"></div>
<svg class="a" style="left:415px;top:383px" width="10" height="12"><rect width="10" height="12" fill="#1f6a3a"/><path d="M5 1v10M2 4h6M2 8h6" stroke="#8ee0a0" stroke-width="1.5"/><circle cx="5" cy="6" r="2" fill="#c0ffd0"/></svg>
<div class="a" style="left:427px;top:382px;font:bold 9.4px/14px 'Liberation Sans',sans-serif;color:#fff;white-space:pre">Messungen und Einstellungen  Computer 1</div>
<div class="btn bmin" style="left:652px;top:384px;width:13px;height:10px"></div>
<div class="btn bmax" style="left:665px;top:384px;width:12px;height:10px"></div>
<div class="btn bcls" style="left:679px;top:384px;width:13px;height:10px"></div>
<div class="a" style="left:412px;top:397px;width:281px;height:277px;background:#054887"></div>
<div class="a" style="left:412px;top:397px;width:281px;height:14px;background:#1256a6"></div>
<div class="a mono w" style="left:423.7px;top:399px"> SERCOM      Heizung           Haus 1</div>
<div class="a" style="left:629px;top:424.0px;width:49px;height:11px;background:#6ef06e"></div>
<div class="a mono k" style="left:629px;top:424.0px;width:48px;text-align:right">17,0</div>
<div class="btn" style="left:679px;top:424.0px;width:12px;height:11px;background:#e0dcd8"></div>
<div class="a" style="left:682px;top:431.0px;width:7px;height:2px;background:#303030"></div>
<div class="a" style="left:629px;top:435.9px;width:49px;height:11px;background:#6ef06e"></div>
<div class="a mono k" style="left:629px;top:435.9px;width:48px;text-align:right">0,0</div>
<div class="a" style="left:629px;top:447.8px;width:49px;height:11px;background:#6ef06e"></div>
<div class="a mono k" style="left:629px;top:447.8px;width:48px;text-align:right">0,00</div>
<div class="a" style="left:629px;top:459.8px;width:49px;height:11px;background:#6ef06e"></div>
<div class="a mono k" style="left:629px;top:459.8px;width:48px;text-align:right">0,00</div>
<div class="a" style="left:629px;top:471.7px;width:49px;height:11px;background:#6ef06e"></div>
<div class="a mono k" style="left:629px;top:471.7px;width:48px;text-align:right">2,0</div>
<div class="a" style="left:629px;top:483.6px;width:49px;height:11px;background:#6ef06e"></div>
<div class="a mono k" style="left:629px;top:483.6px;width:48px;text-align:right">0,0</div>
<div class="a" style="left:629px;top:495.5px;width:49px;height:11px;background:#6ef06e"></div>
<div class="a mono k" style="left:629px;top:495.5px;width:48px;text-align:right">0,0</div>
<div class="btn" style="left:679px;top:495.5px;width:12px;height:11px;background:#e0dcd8"></div>
<div class="a" style="left:682px;top:502.5px;width:7px;height:2px;background:#303030"></div>
<div class="a" style="left:629px;top:507.4px;width:49px;height:11px;background:#6ef06e"></div>
<div class="a mono k" style="left:629px;top:507.4px;width:48px;text-align:right">0,0</div>
<div class="a" style="left:629px;top:519.4px;width:49px;height:11px;background:#6ef06e"></div>
<div class="a mono k" style="left:629px;top:519.4px;width:48px;text-align:right">0,0</div>
<div class="a" style="left:629px;top:531.3px;width:49px;height:11px;background:#6ef06e"></div>
<div class="a mono k" style="left:629px;top:531.3px;width:48px;text-align:right">-5,0</div>
<div class="a" style="left:629px;top:555.1px;width:49px;height:11px;background:#ffffff"></div>
<div class="a mono k" style="left:629px;top:555.1px;width:48px;text-align:right">17</div>
<div class="a" style="left:629px;top:567.0px;width:49px;height:11px;background:#6ef06e"></div>
<div class="a mono k" style="left:629px;top:567.0px;width:48px;text-align:right">0,0</div>
<div class="a" style="left:629px;top:579.0px;width:49px;height:11px;background:#6ef06e"></div>
<div class="a mono k" style="left:629px;top:579.0px;width:48px;text-align:right">5,00</div>
<div class="a" style="left:629px;top:590.9px;width:49px;height:11px;background:#6ef06e"></div>
<div class="a mono k" style="left:629px;top:590.9px;width:48px;text-align:right">2,0</div>
<div class="a" style="left:629px;top:602.8px;width:49px;height:11px;background:#6ef06e"></div>
<div class="a mono k" style="left:629px;top:602.8px;width:48px;text-align:right">-2,0</div>
<div class="a mono" style="left:423.7px;top:424.6px;line-height:11.92px"><span class="c">Heizungstemperatur       (=) °C</span>
<span class="g">  Tageseinfluss              °C</span>
<span class="g">    Anfang        Sonne auf+Std</span>
<span class="g">    Ende         Sonne unt.+Std</span>
<span class="g">    Zunahmegeschwind. °C/Stunde</span>
<span class="g">  Lichteinfluss              °C</span>
<span class="c">  Extra Lichteinfluss (=)    °C</span>
<span class="g">  Periode A Einfluss         °C</span>
<span class="g">  Periode B Einfluss         °C</span>
<span class="g">Abweichung niedriger Alarm   °C</span>

<span class="g">Mittlere 24 Stunden Temp.    °C</span>
<span class="g">    Strahlungssumme Einfluss °C</span>
<span class="g">  Zeitspanne Korrektion     Std</span>
<span class="g">  Maximum Korrektion pos.    °C</span>
<span class="g">  Maximum Korrektion neg.    °C</span></div>
<div class="a face" style="left:412px;top:674px;width:283px;height:7px;background:#d8d4d0"></div>
<div class="a" style="left:412px;top:674px;width:283px;height:1px;background:#f0f0f0"></div>
<div class="a" style="left:412px;top:675px;width:281px;height:5px;overflow:hidden"><div class="a" style="left:54px;top:-1px;font:10.667px/12px 'Liberation Mono',monospace;color:#202020;white-space:pre">Montag, 12. Mai 2003  11:59</div></div>
<div class="a" style="left:693px;top:380px;width:2px;height:301px;background:#f4f4f4"></div>
<div class="a" style="left:695px;top:380px;width:2px;height:295px;background:#806858"></div>
<div class="a" style="left:697px;top:380px;width:2px;height:295px;background:#f0f0f0"></div>
<div class="a" style="left:697px;top:381px;width:220px;height:1px;background:#a06050"></div>
<div class="a" style="left:699px;top:382px;width:218px;height:292px;background:#000080"></div>
<div class="a" style="left:697px;top:674px;width:263px;height:2px;background:#f0f0ec"></div>
<div class="a" style="left:917px;top:643px;width:43px;height:31px;background:#d4d0c8;border-top:1px solid #fff"></div>
<div class="a" style="left:917px;top:645px;width:40px;height:18px;border:1px solid;border-color:#808080 #fff #fff #808080"></div>
<div class="a" style="left:957px;top:644px;width:3px;height:19px;background:#000"></div>
<div class="a ui" style="left:927px;top:647px;font-size:9px;line-height:14px;color:#202020">08:52</div>
<div class="a" style="left:918px;top:652px;width:5px;height:3px;background:#fff;border:1px solid #404040"></div>
<div class="a" style="left:917px;top:663px;width:43px;height:18px;background:#d4d0c8"></div>
<div class="a" style="left:412px;top:680px;width:548px;height:1px;background:#808080"></div>
<!-- ===== SERCOM logo ===== -->
<div class="a" style="left:0;top:0;width:160px;height:88px;background:#fff"></div>
<svg class="a" style="left:0;top:0" width="44" height="87" viewBox="0 0 44 87">
<rect width="44" height="87" fill="#3c9c8c"/>
<g fill="none" stroke="#d8fff4" stroke-width="1.6">
<line x1="22" y1="0" x2="22" y2="87"/>
<line x1="0" y1="54" x2="44" y2="54"/>
<circle cx="22" cy="54" r="5.5"/>
<path d="M27.5 51.5 A12 12 0 0 0 22 40.6 A15 15 0 0 0 5 54 A19 19 0 0 0 22 75 A23 23 0 0 0 45 52"/>
<path d="M0 26 C8 22 14 20.5 22 20.5 C32 20.5 40 27 44 37"/>
</g>
</svg>
<div class="a" style="left:51px;top:30.8px;font:bold 25.5px/28px 'Liberation Serif',serif;color:#666;transform:scaleX(0.9);transform-origin:0 0;letter-spacing:0.4px">SERCOM</div>

<!-- ===== LWK logo ===== -->
<div class="a" style="left:728px;top:12px;width:13px;height:13px;border-radius:50%;background:#1e9a4a"></div>
<div class="a" style="left:739px;top:8px;width:4px;height:31px;background:#2c6a3c"></div>
<div class="a" style="left:744px;top:5px;font:16px/20px 'Liberation Sans',sans-serif;color:#1c2a1c;white-space:pre;letter-spacing:0.25px">Landwirtschaftskammer</div>
<div class="a" style="left:744px;top:20px;font:22px/26px 'Liberation Sans',sans-serif;color:#1a9a4a;white-space:pre;letter-spacing:0.22px">Nordrhein-Westfalen</div>

<!-- ===== footer text ===== -->
<div class="a" style="left:61px;top:692.5px;font:bold 13px/16px 'Liberation Sans',sans-serif;color:#1a9448;white-space:pre;letter-spacing:0.1px">otto.domke@lwk.nrw.de</div>
<div class="a" style="left:915px;top:694.5px;font:17px/20px 'Liberation Sans',sans-serif;color:#1a9a4a;white-space:pre;letter-spacing:1.2px">66</div>

</body></html>
